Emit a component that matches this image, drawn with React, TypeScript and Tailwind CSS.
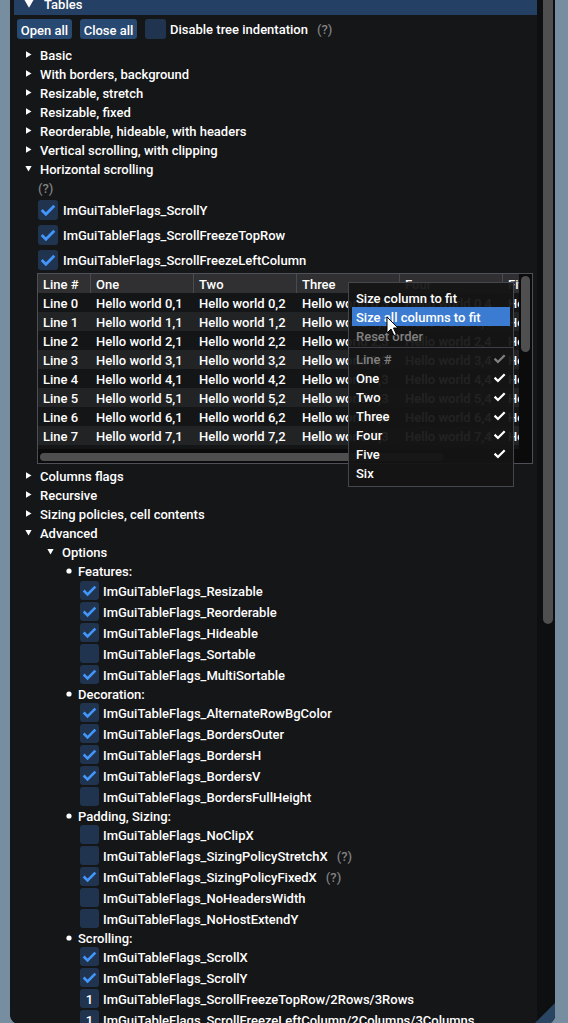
import React from 'react';

type Flag = { label: string; checked?: boolean; help?: boolean; value?: string };

const features: Flag[] = [
  { label: 'ImGuiTableFlags_Resizable', checked: true },
  { label: 'ImGuiTableFlags_Reorderable', checked: true },
  { label: 'ImGuiTableFlags_Hideable', checked: true },
  { label: 'ImGuiTableFlags_Sortable' },
  { label: 'ImGuiTableFlags_MultiSortable', checked: true },
];

const decoration: Flag[] = [
  { label: 'ImGuiTableFlags_AlternateRowBgColor', checked: true },
  { label: 'ImGuiTableFlags_BordersOuter', checked: true },
  { label: 'ImGuiTableFlags_BordersH', checked: true },
  { label: 'ImGuiTableFlags_BordersV', checked: true },
  { label: 'ImGuiTableFlags_BordersFullHeight' },
];

const padding: Flag[] = [
  { label: 'ImGuiTableFlags_NoClipX' },
  { label: 'ImGuiTableFlags_SizingPolicyStretchX', help: true },
  { label: 'ImGuiTableFlags_SizingPolicyFixedX', checked: true, help: true },
  { label: 'ImGuiTableFlags_NoHeadersWidth' },
  { label: 'ImGuiTableFlags_NoHostExtendY' },
];

const scrolling: Flag[] = [
  { label: 'ImGuiTableFlags_ScrollX', checked: true },
  { label: 'ImGuiTableFlags_ScrollY', checked: true },
  { label: 'ImGuiTableFlags_ScrollFreezeTopRow/2Rows/3Rows', value: '1' },
  { label: 'ImGuiTableFlags_ScrollFreezeLeftColumn/2Columns/3Columns', value: '1' },
];

const columns = ['Line #', 'One', 'Two', 'Three', 'Four', 'Five'];
const colWidths = ['w-[52px]', 'w-[103px]', 'w-[103px]', 'w-[103px]', 'w-[103px]', 'w-[103px]'];

// text nudged 1px down so glyphs sit where ImGui draws them
function T({ children, className = '' }: { children: React.ReactNode; className?: string }) {
  return <span className={`whitespace-nowrap pt-[2px] ${className}`}>{children}</span>;
}

function TreeArrow({ open }: { open: boolean }) {
  return (
    <span className="flex w-[7px] shrink-0 justify-center">
      {open ? (
        <svg width="7" height="6" viewBox="0 0 7 6">
          <polygon points="0.35,0 6.65,0 3.5,5.5" fill="#fff" />
        </svg>
      ) : (
        <svg width="6" height="7" viewBox="0 0 6 7">
          <polygon points="0,0.35 5.5,3.5 0,6.65" fill="#fff" />
        </svg>
      )}
    </span>
  );
}

function TreeRow({ label, open = false, nested = false }: { label: string; open?: boolean; nested?: boolean }) {
  return (
    <div className={`flex h-[19px] items-center ${nested ? 'pl-[37px]' : 'pl-[15px]'}`}>
      <TreeArrow open={open} />
      <T className="ml-[8px]">{label}</T>
    </div>
  );
}

function Help() {
  return <T className="ml-[9px] text-[#808080]">(?)</T>;
}

function CheckMark({ size }: { size: 20 | 19 }) {
  if (size === 20) {
    return (
      <svg width="20" height="20" viewBox="0 0 20 20">
        <polyline points="3.7,10 7.9,14.2 16.3,5.8" fill="none" stroke="#4296fa" strokeWidth="2.8" />
      </svg>
    );
  }
  return (
    <svg width="19" height="19" viewBox="0 0 19 19">
      <polyline points="3.65,9.5 7.55,13.4 15.35,5.6" fill="none" stroke="#4296fa" strokeWidth="2.6" />
    </svg>
  );
}

function BigCheckbox({ label, checked }: { label: string; checked?: boolean }) {
  return (
    <div className="flex h-[20px] items-center pl-[28px]">
      <span className="h-[20px] w-[20px] shrink-0 rounded-[3px] bg-[#21344f]">{checked && <CheckMark size={20} />}</span>
      <T className="ml-[5px]">{label}</T>
    </div>
  );
}

function SmallCheckbox({ flag }: { flag: Flag }) {
  return (
    <div className="flex h-[21px] items-center pl-[70px]">
      <span className="flex h-[19px] w-[19px] shrink-0 items-center justify-center rounded-[3px] bg-[#21344f]">
        {flag.checked && <CheckMark size={19} />}
        {flag.value && <span className="pt-[1px] leading-none">{flag.value}</span>}
      </span>
      <T className="ml-[4px]">{flag.label}</T>
      {flag.help && <Help />}
    </div>
  );
}

function BulletRow({ label, tall = false }: { label: string; tall?: boolean }) {
  return (
    <div className={`flex items-center pl-[56px] ${tall ? 'h-[19px]' : 'h-[17px]'}`}>
      <svg width="6" height="6" viewBox="0 0 6 6" className="shrink-0">
        <circle cx="3" cy="3" r="2.6" fill="#fff" />
      </svg>
      <T className="ml-[6px]">{label}</T>
    </div>
  );
}

function MenuCheck({ dim }: { dim?: boolean }) {
  return (
    <svg width="12" height="12" viewBox="0 0 12 12">
      <polyline points="0.56,5.62 3.94,9 10.7,2.24" fill="none" stroke={dim ? '#808080' : '#fff'} strokeWidth="2.25" />
    </svg>
  );
}

function ContextMenu() {
  const items = ['One', 'Two', 'Three', 'Four', 'Five'];
  return (
    <div className="absolute left-[310px] top-[8px] z-10 h-[205px] w-[166px] border border-[#46464e] bg-[#141414]/[0.94] px-[3px] pt-[5px]">
      <div className="flex h-[19px] items-center pl-[4px]"><T>Size column to fit</T></div>
      <div className="flex h-[19px] items-center bg-[#3b7cd2] pl-[4px]"><T>Size all columns to fit</T></div>
      <div className="flex h-[19px] items-center pl-[4px] text-[#808080]"><T>Reset order</T></div>
      <div className="-mx-[3px] flex h-[4px] items-center">
        <div className="h-px w-full bg-[#3f3f46]" />
      </div>
      <div className="flex h-[19px] items-center justify-between pl-[4px] pr-[4px] text-[#808080]">
        <T>Line #</T>
        <MenuCheck dim />
      </div>
      {items.map((item) => (
        <div key={item} className="flex h-[19px] items-center justify-between pl-[4px] pr-[4px]">
          <T>{item}</T>
          <MenuCheck />
        </div>
      ))}
      <div className="flex h-[19px] items-center pl-[4px]"><T>Six</T></div>
    </div>
  );
}

function Cursor() {
  return (
    <svg width="13" height="21" viewBox="0 0 13 21" className="absolute left-[348px] top-[42px] z-20">
      <path d="M1,1 L1,17 L5,13 L8,19.5 L10.5,18.5 L7.5,12 L12,12 Z" fill="#fff" stroke="#000" strokeWidth="1" strokeLinejoin="round" />
    </svg>
  );
}

function ScrollTable() {
  const rows = Array.from({ length: 9 }, (_, i) => i);
  return (
    <div className="relative ml-[27px] mt-[3px] h-[191px] w-[496px] border border-[#4f4f59]">
      <div className="flex">
        <div className="h-[175px] w-[481px] overflow-hidden">
          <div className="flex h-[19px] bg-[#303033]">
            {columns.map((c, ci) => (
              <div
                key={c}
                className={`flex shrink-0 items-center ${colWidths[ci]} ${ci === 0 ? 'pl-[5px]' : 'border-l border-[#4a4a52] pl-[5px]'}`}
              >
                <T>{c}</T>
              </div>
            ))}
          </div>
          {rows.map((r) => (
            <div key={r} className={`flex h-[19px] ${r % 2 === 1 ? 'bg-[#222325]' : 'bg-[#141517]'}`}>
              {columns.map((c, ci) => (
                <div key={c} className={`flex shrink-0 items-center ${colWidths[ci]} ${ci === 0 ? 'pl-[5px]' : 'pl-[6px]'}`}>
                  <T>{ci === 0 ? `Line ${r}` : `Hello world ${r},${ci}`}</T>
                </div>
              ))}
            </div>
          ))}
        </div>
        <div className="h-[175px] w-[13px] bg-[#0b0b0c] pl-[2px] pt-[2px]">
          <div className="h-[76px] w-[9px] rounded-full bg-[#4f4f4f]" />
        </div>
      </div>
      <div className="flex h-[14px]">
        <div className="h-[14px] w-[481px] bg-[#0b0b0c] pl-[2px] pt-[4px]">
          <div className="h-[8px] w-[404px] rounded-full bg-[#4f4f4f]" />
        </div>
        <div className="h-[14px] w-[13px] bg-[#0b0b0c]" />
      </div>
      <ContextMenu />
      <Cursor />
    </div>
  );
}

export default function App() {
  return (
    <div className="h-[1023px] w-[568px] overflow-hidden bg-[#768ea0] font-[Roboto,sans-serif] text-[13px] font-medium text-white">
      <div className="relative ml-[10px] flex h-[1024px] w-[545px] overflow-hidden rounded-b-[9px] bg-[#151618]">
        <div className="flex w-[527px] flex-col">
          {/* Tables header */}
          <div className="ml-[4px] flex h-[15px] w-[523px] items-center bg-[#244064] pb-[7px] pl-[10px]">
            <svg width="10" height="8" viewBox="0 0 10 8" className="shrink-0">
              <polygon points="0.5,0 9.5,0 5,7.8" fill="#fff" />
            </svg>
            <T className="ml-[10px]">Tables</T>
          </div>

          {/* toolbar */}
          <div className="ml-[7px] mt-[4px] flex h-[20px] items-center">
            <button className="h-[20px] w-[55px] rounded-[3px] bg-[#284971] pt-[2px] text-white">Open all</button>
            <button className="ml-[8px] h-[20px] w-[57px] rounded-[3px] bg-[#284971] pt-[2px] text-white">Close all</button>
            <span className="ml-[8px] h-[20px] w-[21px] rounded-[3px] bg-[#21344f]" />
            <T className="ml-[4px]">Disable tree indentation</T>
            <Help />
          </div>
          <div className="ml-[7px] mt-[5px] h-px w-[520px] bg-[#3f3f46]" />

          <div className="mt-[1px] flex flex-col">
            <TreeRow label="Basic" />
            <TreeRow label="With borders, background" />
            <TreeRow label="Resizable, stretch" />
            <TreeRow label="Resizable, fixed" />
            <TreeRow label="Reorderable, hideable, with headers" />
            <TreeRow label="Vertical scrolling, with clipping" />
            <TreeRow label="Horizontal scrolling" open />
            <div className="flex h-[19px] items-center pl-[28px] text-[#808080]">
              <T>(?)</T>
            </div>
            <div className="mt-[3px] flex flex-col gap-[5px]">
              <BigCheckbox label="ImGuiTableFlags_ScrollY" checked />
              <BigCheckbox label="ImGuiTableFlags_ScrollFreezeTopRow" checked />
              <BigCheckbox label="ImGuiTableFlags_ScrollFreezeLeftColumn" checked />
            </div>
            <ScrollTable />
            <div className="mt-[2px] flex flex-col">
              <TreeRow label="Columns flags" />
              <TreeRow label="Recursive" />
              <TreeRow label="Sizing policies, cell contents" />
              <TreeRow label="Advanced" open />
              <TreeRow label="Options" open nested />
            </div>
            <BulletRow label="Features:" tall />
            {features.map((f) => (
              <SmallCheckbox key={f.label} flag={f} />
            ))}
            <BulletRow label="Decoration:" />
            {decoration.map((f) => (
              <SmallCheckbox key={f.label} flag={f} />
            ))}
            <BulletRow label="Padding, Sizing:" />
            {padding.map((f) => (
              <SmallCheckbox key={f.label} flag={f} />
            ))}
            <BulletRow label="Scrolling:" />
            {scrolling.map((f) => (
              <SmallCheckbox key={f.label} flag={f} />
            ))}
          </div>
        </div>

        {/* window scrollbar */}
        <div className="h-full w-[18px] bg-[#0e0f10] pl-[6px]">
          <div className="h-[624px] w-[10px] rounded-b-[5px] bg-[#4f4f4f]" />
        </div>

        {/* resize grip */}
        <svg width="21" height="21" viewBox="0 0 21 21" className="absolute bottom-0 right-0">
          <polygon points="0,21 21,21 21,0" fill="#2a4561" />
        </svg>
      </div>
    </div>
  );
}
